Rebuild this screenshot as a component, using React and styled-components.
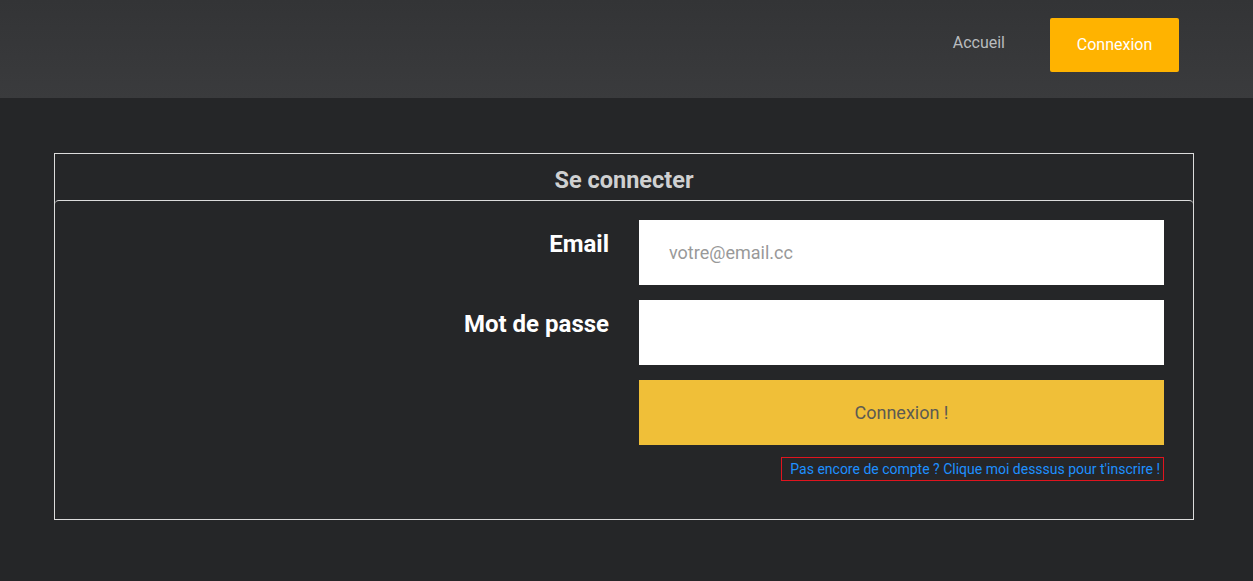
import React from 'react';
import styled, { createGlobalStyle } from 'styled-components';

const GlobalStyle = createGlobalStyle`
  body {
    margin: 0;
    background: #252628;
    font-family: Roboto, "Liberation Sans", sans-serif;
  }
`;

const App = () => {
  return (
    <>
      <GlobalStyle />
      <Header>
        <NavLink href="#">Accueil</NavLink>
        <NavButton>Connexion</NavButton>
      </Header>
      <Main>
        <Panel>
          <PanelTitle>Se connecter</PanelTitle>
          <PanelBody>
            <Label>Email</Label>
            <Input type="text" placeholder="votre@email.cc" />
            <Label>Mot de passe</Label>
            <Input type="password" />
            <span />
            <SubmitButton>Connexion !</SubmitButton>
            <span />
            <LinkRow>
              <SignupLink href="#">Pas encore de compte ? Clique moi desssus pour t'inscrire !</SignupLink>
            </LinkRow>
          </PanelBody>
        </Panel>
      </Main>
    </>
  );
};

const Header = styled.header`
  display: flex;
  align-items: center;
  justify-content: flex-end;
  height: 98px;
  padding-right: 74px;
  box-sizing: border-box;
  background: linear-gradient(to bottom, #333436, #3a3b3d);
`;

const NavLink = styled.a`
  color: #b9bcbf;
  font-size: 16px;
  text-decoration: none;
  margin-right: 45px;
  margin-top: -14px;
`;

const NavButton = styled.button`
  width: 129px;
  height: 54px;
  margin-top: -8px;
  padding-bottom: 2px;
  border: none;
  border-radius: 2px;
  background: #ffb300;
  color: #fff;
  font-family: inherit;
  font-size: 16px;
`;

const Main = styled.main`
  padding: 55px 59px 0 54px;
`;

const Panel = styled.section`
  border: 1px solid #dcdcdc;
  height: 367px;
  box-sizing: border-box;
`;

const PanelTitle = styled.h2`
  margin: 0;
  height: 46px;
  line-height: 52px;
  text-align: center;
  color: #cfd0d1;
  font-size: 23.5px;
  font-weight: 700;
`;

const PanelBody = styled.div`
  display: grid;
  grid-template-columns: 1fr 525px;
  column-gap: 30px;
  row-gap: 15px;
  padding: 19px 29px 0 0;
  border-top: 1px solid #dcdcdc;
  border-radius: 4px 4px 0 0;
`;

const Label = styled.label`
  text-align: right;
  color: #fff;
  font-size: 24px;
  font-weight: 700;
  padding-top: 10px;
`;

const Input = styled.input`
  height: 65px;
  box-sizing: border-box;
  border: none;
  outline: none;
  padding: 0 30px;
  background: #fff;
  font-family: inherit;
  font-size: 18px;
  color: #333;
  &::placeholder {
    color: #999;
  }
`;

const SubmitButton = styled.button`
  height: 65px;
  padding-bottom: 2px;
  border: none;
  background: #f0bf38;
  color: #5c5a52;
  font-family: inherit;
  font-size: 18px;
`;

const LinkRow = styled.div`
  display: flex;
  justify-content: flex-end;
  margin-top: -3px;
`;

const SignupLink = styled.a`
  display: inline-block;
  border: 1px solid #e0141e;
  padding: 3px 3px 3px 8px;
  color: #1e90ff;
  font-size: 14px;
  line-height: 16px;
  text-decoration: none;
`;

export default App;
